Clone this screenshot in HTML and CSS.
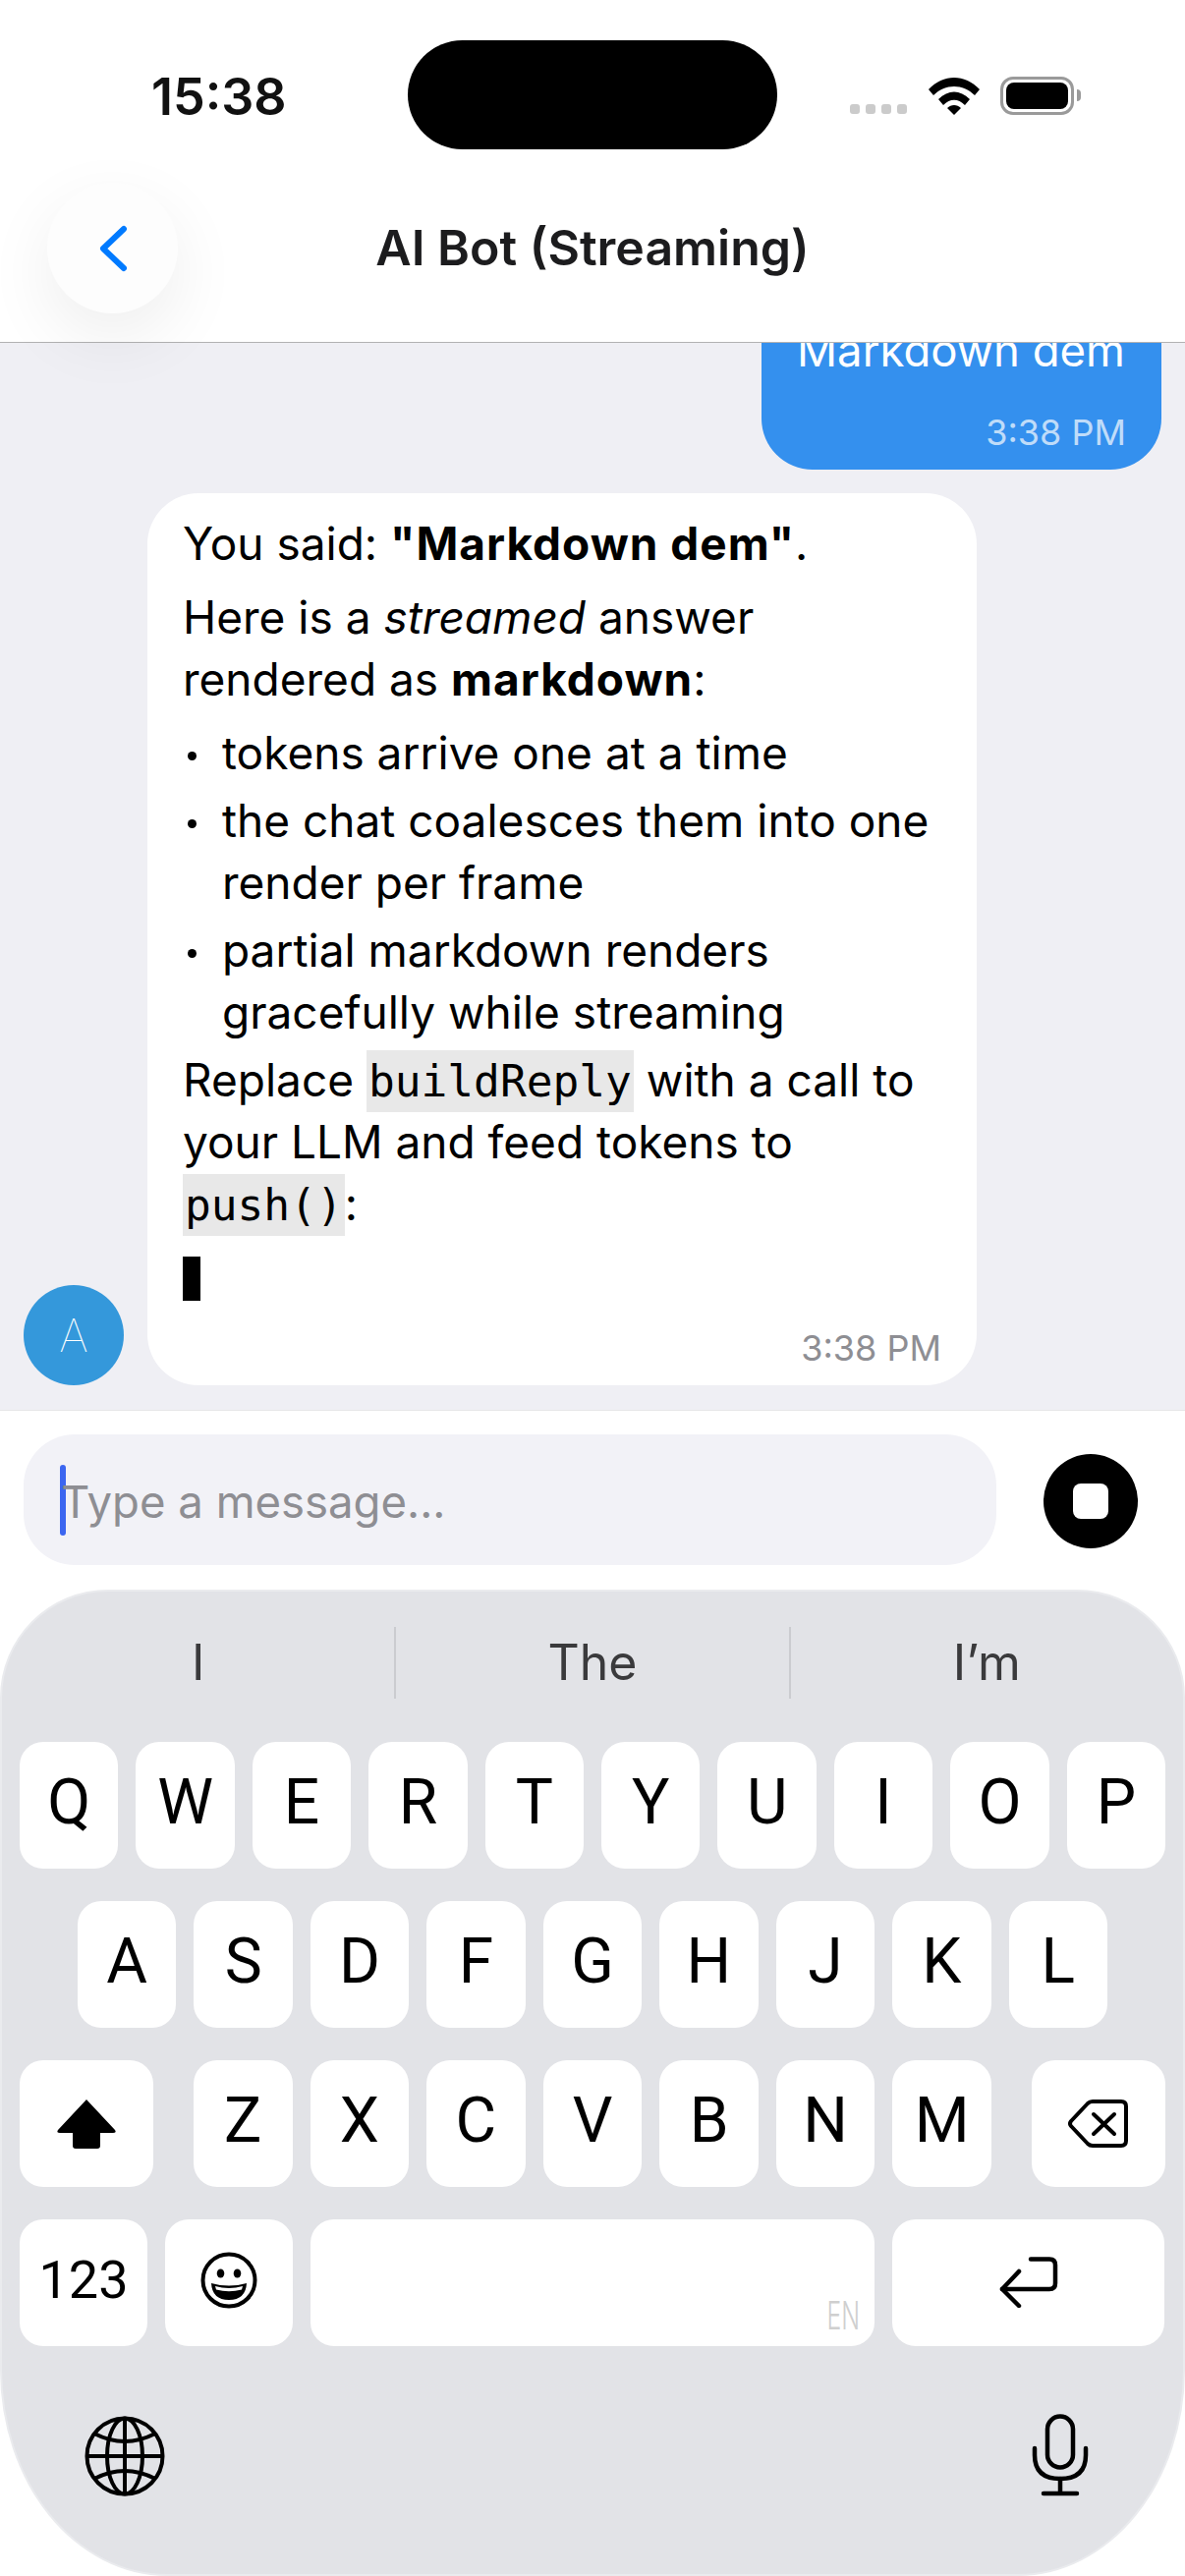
FILE: index.html
```html
<!DOCTYPE html>
<html lang="en">
<head>
    <meta charset="UTF-8">
    <meta name="viewport" content="width=device-width, initial-scale=1.0">
    <title>AI Bot (Streaming)</title>
    <link rel="stylesheet" href="styles.css">
</head>
<body>
    <div class="screen">
        <header class="top">
            <div class="status-bar">
                <div class="time">15:38</div>
                <div class="island"></div>
                <div class="status-icons">
                    <div class="dots"><span></span><span></span><span></span><span></span></div>
                    <svg class="wifi" viewBox="0 0 52 38" width="52" height="38">
                        <path d="M0 12 C15 -4 37 -4 52 12 L47 18 C35 6 17 6 5 18 Z"/>
                        <path d="M10 22 C20 12 32 12 42 22 L37 28 C30 21 22 21 15 28 Z"/>
                        <path d="M19 31 C23 27 29 27 33 31 L26 38 Z"/>
                    </svg>
                    <div class="battery"><div class="battery-fill"></div></div>
                    <div class="battery-tip"></div>
                </div>
            </div>
            <div class="nav-bar">
                <button class="back-btn">
                    <svg viewBox="0 0 30 48" width="30" height="48">
                        <path d="M26 4 L5 24 L26 44" fill="none" stroke="#007aff" stroke-width="6" stroke-linecap="round" stroke-linejoin="round"/>
                    </svg>
                </button>
                <div class="title">AI Bot (Streaming)</div>
            </div>
        </header>

        <main class="chat">
            <div class="msg-out">
                <div class="bubble-out">
                    <div class="msg-text">Markdown dem</div>
                    <div class="msg-time">3:38 PM</div>
                </div>
            </div>
            <div class="msg-in">
                <div class="avatar">A</div>
                <div class="bubble-in">
                    <p class="md-p">You said: <b>"Markdown dem"</b>.</p>
                    <p class="md-p">Here is a <i>streamed</i> answer rendered as <b>markdown</b>:</p>
                    <ul class="md-list">
                        <li>tokens arrive one at a time</li>
                        <li>the chat coalesces them into one render per frame</li>
                        <li>partial markdown renders gracefully while streaming</li>
                    </ul>
                    <p class="md-p">Replace <code>buildReply</code> with a call to your LLM and feed tokens to <code>push()</code>:</p>
                    <div class="cursor"></div>
                    <div class="msg-time">3:38 PM</div>
                </div>
            </div>
        </main>

        <div class="composer">
            <div class="input">
                <div class="caret"></div>
                <div class="placeholder">Type a message...</div>
            </div>
            <button class="stop-btn"><span></span></button>
        </div>

        <div class="keyboard">
            <div class="suggestions">
                <div class="suggestion">I</div>
                <div class="suggestion">The</div>
                <div class="suggestion">I’m</div>
            </div>
            <div class="row">
                <div class="key">Q</div><div class="key">W</div><div class="key">E</div><div class="key">R</div><div class="key">T</div>
                <div class="key">Y</div><div class="key">U</div><div class="key">I</div><div class="key">O</div><div class="key">P</div>
            </div>
            <div class="row row-home">
                <div class="key">A</div><div class="key">S</div><div class="key">D</div><div class="key">F</div><div class="key">G</div>
                <div class="key">H</div><div class="key">J</div><div class="key">K</div><div class="key">L</div>
            </div>
            <div class="row">
                <div class="key key-shift">
                    <svg viewBox="0 0 62 52" width="62" height="52">
                        <path d="M31 1 L60 32 Q62 35 58 35 L45 35 L45 48 Q45 51 42 51 L20 51 Q17 51 17 48 L17 35 L4 35 Q0 35 2 32 Z"/>
                    </svg>
                </div>
                <div class="letters">
                    <div class="key">Z</div><div class="key">X</div><div class="key">C</div><div class="key">V</div>
                    <div class="key">B</div><div class="key">N</div><div class="key">M</div>
                </div>
                <div class="key key-delete">
                    <svg viewBox="0 0 62 52" width="62" height="52" fill="none" stroke="#000" stroke-width="4" stroke-linecap="round" stroke-linejoin="round">
                        <path d="M25 3 L54 3 Q59 3 59 8 L59 43 Q59 48 54 48 L25 48 Q22 48 20 46 L3 28 Q1 25.5 3 23 L20 5 Q22 3 25 3 Z"/>
                        <path d="M26 16 L47 36 M47 16 L26 36"/>
                    </svg>
                </div>
            </div>
            <div class="row">
                <div class="key key-num">123</div>
                <div class="key key-emoji">
                    <svg viewBox="0 0 58 58" width="58" height="58">
                        <circle cx="29" cy="29" r="26.5" fill="none" stroke="#000" stroke-width="4"/>
                        <ellipse cx="20.5" cy="22" rx="3.8" ry="4.5"/>
                        <ellipse cx="37.5" cy="22" rx="3.8" ry="4.5"/>
                        <path d="M11 32 Q29 37 47 32 Q46 49 29 49 Q12 49 11 32 Z"/>
                        <path d="M15 35 Q29 39 43 35 L42 38.5 Q29 42 16 38.5 Z" fill="#fff"/>
                    </svg>
                </div>
                <div class="key key-space"><span class="lang">EN</span></div>
                <div class="key key-return">
                    <svg viewBox="0 0 60 52" width="60" height="52" fill="none" stroke="#000" stroke-width="4.5" stroke-linecap="round" stroke-linejoin="round">
                        <path d="M32 2.5 L51 2.5 Q57 2.5 57 8.5 L57 27 Q57 33 51 33 L3 33"/>
                        <path d="M20 15 L3 33 L20 50"/>
                    </svg>
                </div>
            </div>
            <div class="kb-bottom">
                <svg viewBox="0 0 82 82" width="82" height="82" fill="none" stroke="#000" stroke-width="4">
                    <circle cx="41" cy="41" r="38.5"/>
                    <ellipse cx="41" cy="41" rx="18" ry="38.5"/>
                    <path d="M41 2 L41 80 M2.5 41 L79.5 41"/>
                    <path d="M10 18 Q41 34 72 18 M10 64 Q41 48 72 64"/>
                </svg>
                <svg viewBox="0 0 58 84" width="58" height="84" fill="none" stroke="#000" stroke-width="4.5" stroke-linecap="round">
                    <rect x="16" y="2.5" width="26" height="52" rx="13"/>
                    <path d="M3 35 L3 42 Q3 66 29 66 Q55 66 55 42 L55 35"/>
                    <path d="M29 66 L29 80 M12 81 L46 81"/>
                </svg>
            </div>
        </div>
    </div>
</body>
</html>
```

FILE: styles.css
```css
* {
    box-sizing: border-box;
}

body {
    margin: 0;
    font-family: 'Inter', 'Liberation Sans', sans-serif;
    background: #fff;
    color: #000;
}

.screen {
    width: 1206px;
    height: 2622px;
    display: flex;
    flex-direction: column;
    overflow: hidden;
}

/* Header */
.top {
    height: 349px;
    flex: none;
    background: #fff;
    border-bottom: 1px solid #b2b2b2;
    position: relative;
    z-index: 2;
}

.status-bar {
    height: 184px;
    display: flex;
    padding: 41px 0 0 154px;
}

.time {
    width: 135px;
    margin-top: 24px;
    font-size: 52px;
    line-height: 68px;
    font-weight: 600;
    color: #111;
    white-space: nowrap;
}

.island {
    width: 376px;
    height: 111px;
    margin-left: 126px;
    border-radius: 56px;
    background: #000;
}

.status-icons {
    height: 40px;
    margin-top: 37px;
    margin-left: 74px;
    display: flex;
    align-items: flex-start;
}

.dots {
    display: flex;
    gap: 6px;
    margin-top: 28px;
    margin-right: 22px;
}

.dots span {
    width: 10px;
    height: 10px;
    border-radius: 3px;
    background: #cbcbcb;
}

.wifi {
    margin-top: 1px;
    margin-right: 21px;
}

.battery {
    width: 75px;
    height: 39px;
    border: 3px solid #9a9a9a;
    border-radius: 13px;
    padding: 3px;
}

.battery-fill {
    height: 100%;
    background: #000;
    border-radius: 8px;
}

.battery-tip {
    width: 4px;
    height: 12px;
    margin-top: 13px;
    margin-left: 3px;
    background: #9a9a9a;
    border-radius: 0 6px 6px 0;
}

.nav-bar {
    height: 164px;
    display: flex;
    align-items: center;
    justify-content: center;
    position: relative;
}

.back-btn {
    position: absolute;
    left: 48px;
    top: 2px;
    width: 133px;
    height: 133px;
    border: none;
    border-radius: 50%;
    background: #fdfdfd;
    box-shadow: 0 24px 70px rgba(0, 0, 0, 0.07);
    display: flex;
    align-items: center;
    justify-content: center;
    padding: 0;
}

.title {
    margin-top: -28px;
    font-size: 50px;
    font-weight: 600;
    color: #1c1c1e;
}

/* Chat */
.chat {
    height: 1087px;
    flex: none;
    background: #efeff4;
    border-bottom: 1px solid #e6e6e8;
    padding: 0 24px 25px;
    display: flex;
    flex-direction: column;
    justify-content: flex-end;
    gap: 24px;
    overflow: hidden;
}

.msg-out {
    display: flex;
    justify-content: flex-end;
}

.bubble-out {
    width: 407px;
    background: #3490ee;
    color: #fff;
    border-radius: 52px;
    padding: 34px 36px 16px;
}

.msg-text {
    font-size: 45.5px;
    line-height: 60px;
    white-space: nowrap;
}

.msg-time {
    margin-top: 31px;
    text-align: right;
    font-size: 36px;
    line-height: 44px;
    color: rgba(255, 255, 255, 0.7);
}

.msg-in {
    display: flex;
    align-items: flex-end;
    gap: 24px;
}

.avatar {
    width: 102px;
    height: 102px;
    flex: none;
    border-radius: 50%;
    background: #3498db;
    color: #fff;
    font-size: 46px;
    font-weight: 100;
    display: flex;
    align-items: center;
    justify-content: center;
}

.bubble-in {
    width: 844px;
    background: #fff;
    border-radius: 52px;
    padding: 20px 36px 16px;
    font-size: 46px;
    line-height: 63px;
}

.bubble-in b {
    letter-spacing: 1px;
}

.bubble-in .msg-time {
    color: #8e8e93;
    margin-top: 26px;
}

.md-p {
    margin: 0 0 12px;
}

.md-list {
    list-style: none;
    margin: 0;
    padding: 0;
}

.md-list li {
    padding-left: 40px;
    margin-bottom: 6px;
    position: relative;
}

.md-list li::before {
    content: "";
    position: absolute;
    left: 5px;
    top: 30px;
    width: 9px;
    height: 9px;
    border-radius: 50%;
    background: #000;
}

code {
    font-family: 'DejaVu Sans Mono', monospace;
    font-size: 44.5px;
    line-height: 1;
    background: #e8e8e8;
    padding: 6px 2px;
}

.cursor {
    width: 18px;
    height: 45px;
    margin-top: 22px;
    background: #000;
}

/* Input */
.composer {
    height: 182px;
    flex: none;
    display: flex;
    align-items: flex-start;
    padding: 24px 0 0 24px;
}

.input {
    width: 990px;
    height: 133px;
    border-radius: 52px;
    background: #f2f2f7;
    display: flex;
    align-items: center;
    padding-left: 37px;
}

.caret {
    width: 6px;
    height: 72px;
    border-radius: 3px;
    background: #3c66f0;
}

.placeholder {
    font-size: 45.5px;
    color: #8e8e93;
    margin-top: 4px;
    margin-left: -5px;
}

.stop-btn {
    width: 96px;
    height: 96px;
    margin: 20px 0 0 48px;
    border: none;
    border-radius: 50%;
    background: #000;
    display: flex;
    align-items: center;
    justify-content: center;
    padding: 0;
}

.stop-btn span {
    width: 36px;
    height: 36px;
    border-radius: 8px;
    background: #fff;
}

/* Keyboard */
.keyboard {
    flex: 1;
    background: #e2e3e7;
    border: 2px solid #eaebee;
    border-radius: 110px 110px 170px 170px / 110px 110px 210px 210px;
    padding: 0 18px;
}

.suggestions {
    height: 153px;
    display: flex;
    padding: 36px 0 44px;
    margin: 0 -18px;
}

.suggestion {
    flex: 1;
    text-align: center;
    font-size: 50px;
    line-height: 73px;
    color: #3a3a3c;
    border-left: 2px solid #cbccd0;
}

.suggestion:first-child {
    border-left: none;
}

.row {
    height: 129px;
    margin-bottom: 33px;
    display: flex;
    gap: 18px;
}

.row-home {
    padding: 0 59px;
}

.letters {
    flex: 1;
    display: flex;
    gap: 18px;
    padding: 0 23px;
}

.key {
    flex: 1;
    background: #fff;
    border-radius: 24px;
    font-family: 'Roboto', sans-serif;
    font-size: 64px;
    padding-bottom: 6px;
    display: flex;
    align-items: center;
    justify-content: center;
}

.key-shift,
.key-delete {
    flex: none;
    width: 136px;
    padding-bottom: 0;
}

.key-num,
.key-emoji {
    flex: none;
    width: 130px;
}

.key-num {
    font-size: 54px;
}

.key-space {
    flex: none;
    width: 574px;
    position: relative;
}

.key-return {
    flex: none;
    width: 277px;
    padding-bottom: 2px;
}

.lang {
    position: absolute;
    right: 15px;
    bottom: 11px;
    font-family: 'Inter', sans-serif;
    font-size: 40px;
    line-height: 40px;
    font-weight: 300;
    color: #cfcfcf;
    transform: scaleX(0.62);
    transform-origin: right center;
}

.kb-bottom {
    display: flex;
    justify-content: space-between;
    align-items: flex-end;
    padding: 0 78px 0 66px;
    margin-top: 69px;
}
```
